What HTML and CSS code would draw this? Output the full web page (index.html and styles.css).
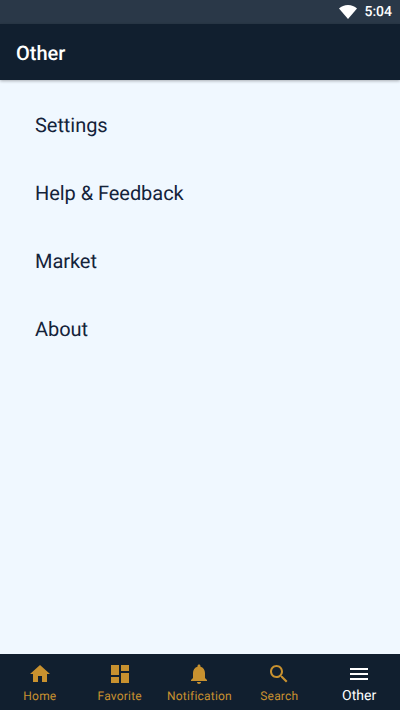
FILE: index.html
```html
<!DOCTYPE html>
<html lang="en">
<head>
    <meta charset="UTF-8">
    <meta name="viewport" content="width=device-width, initial-scale=1.0">
    <title>Other</title>
    <link rel="stylesheet" href="styles.css">
</head>
<body>

<div class="app">
    <!-- Status bar -->
    <div class="status-bar">
        <svg class="wifi" width="18" height="14" viewBox="0 0 18 14"><path d="M0 3.6C2.4 1.3 5.5 0 9 0s6.600 1.300 9 3.600L9 14z" fill="#fff"/></svg>
        <span class="time">5:04</span>
    </div>

    <header class="app-bar">Other</header>

    <!-- Menu list -->
    <ul class="menu">
        <li>Settings</li>
        <li>Help &amp; Feedback</li>
        <li>Market</li>
        <li>About</li>
    </ul>

    <!-- Bottom navigation -->
    <nav class="tabs">
        <div class="tab">
            <svg width="24" height="24" viewBox="0 0 24 24"><path d="M10 20v-6h4v6h5v-8h3L12 3 2 12h3v8z"/></svg>
            <span>Home</span>
        </div>
        <div class="tab">
            <svg width="24" height="24" viewBox="0 0 24 24"><path d="M3 13h8V3H3zm0 8h8v-6H3zm10 0h8V11h-8zm0-18v6h8V3z"/></svg>
            <span>Favorite</span>
        </div>
        <div class="tab">
            <svg width="24" height="24" viewBox="0 0 24 24"><path d="M12 22c1.100 0 2-.9 2-2h-4c0 1.100.9 2 2 2zm6-6v-5c0-3.070-1.630-5.640-4.500-6.320V4c0-.83-.67-1.500-1.500-1.500s-1.500.67-1.500 1.500v.68C7.640 5.360 6 7.920 6 11v5l-2 2v1h16v-1z"/></svg>
            <span>Notification</span>
        </div>
        <div class="tab">
            <svg width="24" height="24" viewBox="0 0 24 24"><path d="M15.500 14h-.79l-.28-.27C15.410 12.590 16 11.110 16 9.500 16 5.910 13.090 3 9.500 3S3 5.910 3 9.500 5.910 16 9.500 16c1.610 0 3.090-.59 4.230-1.570l.27.28v.79l5 4.990L20.490 19zm-6 0C7.010 14 5 11.990 5 9.500S7.010 5 9.500 5 14 7.010 14 9.500 11.990 14 9.500 14z"/></svg>
            <span>Search</span>
        </div>
        <div class="tab active">
            <svg width="24" height="24" viewBox="0 0 24 24"><path d="M3 18h18v-2H3zm0-5h18v-2H3zm0-7v2h18V6z"/></svg>
            <span>Other</span>
        </div>
    </nav>
</div>

</body>
</html>
```

FILE: styles.css
```css
* {
    margin: 0;
    padding: 0;
    box-sizing: border-box;
}

body {
    font-family: 'Roboto', sans-serif;
    background-color: #f0f8ff;
    text-rendering: geometricPrecision;
}

.app {
    height: 710px;
    display: flex;
    flex-direction: column;
    overflow: hidden;
}

.status-bar {
    height: 24px;
    background-color: #2a3848;
    color: #fff;
    display: flex;
    justify-content: flex-end;
    align-items: center;
    gap: 7px;
    padding-right: 8px;
}

.time {
    font-size: 14px;
    font-weight: 500;
}

.app-bar {
    height: 56px;
    background-color: #111f2f;
    color: #fff;
    font-size: 20px;
    font-weight: 500;
    display: flex;
    align-items: center;
    padding: 2px 0 0 16px;
    box-shadow: 0 1px 3px rgba(0, 0, 0, 0.3);
    position: relative;
}

.menu {
    flex: 1;
    list-style: none;
    padding: 11px 0 0 35px;
    color: #14233a;
    font-size: 20px;
    letter-spacing: -0.05px;
}

.menu li {
    height: 68px;
    line-height: 68px;
}

.tabs {
    height: 56px;
    background-color: #111f2f;
    display: flex;
    padding-right: 1px;
}

.tab {
    flex: 1;
    display: flex;
    flex-direction: column;
    align-items: center;
    padding-top: 8px;
    color: #c8912f;
    font-size: 12px;
    letter-spacing: 0.2px;
}

.tab svg {
    fill: #c8912f;
    display: block;
}

.tab span {
    line-height: 14px;
    margin-top: 3px;
}

.tab.active {
    color: #fff;
    font-size: 14px;
    letter-spacing: 0;
}

.tab.active svg {
    fill: #fff;
}
```
